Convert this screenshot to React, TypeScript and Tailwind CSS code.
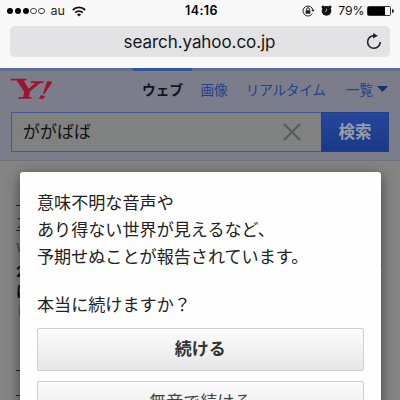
import { type ReactNode } from "react";

const messageLines = [
  "意味不明な音声や",
  "あり得ない世界が見えるなど、",
  "予期せぬことが報告されています。",
];

const signalDots = [true, true, true, false, false];

function StatusBar() {
  return (
    <div className="flex h-[22px] items-center justify-between pl-[7px] pr-[6px] text-[12px] leading-none">
      <div className="flex w-[140px] items-center">
        <div className="flex gap-[1.4px]">
          {signalDots.map((on, i) => (
            <span
              key={i}
              className={
                on
                  ? "h-[6.4px] w-[6.4px] rounded-full bg-black"
                  : "h-[6.4px] w-[6.4px] rounded-full border border-[#444]"
              }
            />
          ))}
        </div>
        <span className="ml-[6px] pt-px text-[12.5px] text-[#222]">au</span>
        <svg className="ml-[7px]" width="14" height="11" viewBox="0 0 14 11" fill="none" stroke="#111" strokeWidth="1.8">
          <path d="M.8 4a8.8 8.8 0 0 1 12.4 0" />
          <path d="M3.2 6.6a5.4 5.4 0 0 1 7.6 0" />
          <path d="M7 10.6 4.9 8.5a3 3 0 0 1 4.2 0z" fill="#111" stroke="none" />
        </svg>
      </div>

      <span className="pl-[2px] pt-px text-[12.5px] font-semibold tracking-[0.4px] text-black">14:16</span>

      <div className="flex w-[140px] items-center justify-end">
        {/* 画面の向きロック */}
        <svg width="13" height="12" viewBox="0 0 13 12" fill="none" stroke="#222">
          <path d="M10.3 8.6A5 5 0 1 1 10.9 5" />
          <path d="m9.1 4.7 1.9 2.1 1.7-2.1z" fill="#222" stroke="none" />
          <rect x="3.6" y="5.2" width="4.8" height="3.6" rx=".4" fill="#222" stroke="none" />
          <path d="M4.6 5.2V4.1a1.4 1.4 0 0 1 2.8 0v1.1" />
        </svg>
        {/* アラーム */}
        <svg className="ml-[6px]" width="11" height="11" viewBox="0 0 11 11" fill="#111">
          <circle cx="5.5" cy="5.9" r="4.8" />
          <circle cx="2" cy="1.9" r="1.5" />
          <circle cx="9" cy="1.9" r="1.5" />
          <path d="M5.6 3.6V6l-1.8.8" fill="none" stroke="#bbb" strokeWidth=".8" />
        </svg>
        <span className="ml-[6px] pt-px text-[12.2px] text-[#111]">79%</span>
        <div className="ml-[3px] flex items-center">
          <div className="flex h-[10px] w-[24px] rounded-[1.5px] border border-[#333]">
            <div className="h-full w-[17px] bg-black" />
          </div>
          <div className="ml-px h-[4px] w-[1.5px] rounded-r bg-[#333]" />
        </div>
      </div>
    </div>
  );
}

function AddressBar() {
  return (
    <div className="mx-[10px] mt-[4px] flex h-[31px] items-center rounded-[5px] bg-[#e3e3e5] pr-[8px]">
      <span className="ml-[23px] flex-1 pt-px text-center text-[17px] leading-none tracking-[-0.07px] text-[#161616]">
        search.yahoo.co.jp
      </span>
      <svg width="16" height="17" viewBox="0 0 16 17" fill="none" stroke="#222" strokeWidth="1.6">
        <path d="M14.2 9a6.3 6.3 0 1 1-6.5-6.3h1" />
        <path d="M7.1 0v5.6l4.8-2.8z" fill="#222" stroke="none" />
      </svg>
    </div>
  );
}

function SearchHeader() {
  return (
    <header className="h-[93px] border-b border-[#70727e] bg-[#7b7e8a]">
      <div className="flex h-[3px] bg-[#5e6d90] pl-[133px]">
        <div className="w-[59px] bg-[#3154a4]" />
      </div>
      <div className="flex h-[41px] pl-[10px] text-[13.7px] leading-[38px] text-[#25408b]">
        <svg className="mt-[7px]" width="43" height="24" viewBox="0 0 43 24" fill="#a31331">
          <path d="M.8.800h15.700v1.700h-2.800l4.800 8.300 6.800-5.900h-4.500V3.200h12.500v1.700h-3.100L20 13.500l-1 5.600h2.500v1.700H8.500v-1.700h4.700l1-5.100L6.700 2.500H.8z" />
          <path d="m37.300 3 5.200.8-7.800 11.900-1.800-.3zM30.700 17.200l4.500.5-1.800 3.400-4.500-.3z" />
        </svg>
        <span className="ml-[89px] font-bold tracking-[0.1px] text-[#10131b]">ウェブ</span>
        <span className="ml-[17px]">画像</span>
        <span className="ml-[18px] tracking-[-0.3px]">リアルタイム</span>
        <span className="ml-[20px]">一覧</span>
        <svg className="ml-[4px] mt-[15px]" width="11" height="6" viewBox="0 0 11 6" fill="#17316f">
          <path d="M0 0h11L5.5 6z" />
        </svg>
      </div>
      <div className="mx-[11px] flex h-[40px]">
        <div className="flex flex-1 items-center justify-between border border-r-0 border-[#435793] bg-[#808281] pl-[11px] pr-[20px]">
          <span className="text-[17px] leading-none text-[#111]">ががばば</span>
          <svg width="18" height="18" viewBox="0 0 18 18" stroke="#5b5c5d" strokeWidth="2.2">
            <path d="m1 1 16 16M17 1 1 17" />
          </svg>
        </div>
        <div className="flex w-[68px] items-center justify-center border border-[#243e83] bg-linear-to-b from-[#25479d] to-[#193987] text-[16.5px] font-bold text-[#979da9]">
          検索
        </div>
      </div>
    </header>
  );
}

// ダイアログの後ろからはみ出す検索結果
function Results() {
  return (
    <div className="flex h-[239px] justify-between bg-[#858585] pl-[16px] pr-[16.5px] text-[15px] leading-[20px] text-[#111]">
      <div className="w-[15px] pt-[44px]">
        <div className="h-px bg-[#20263a]" />
        <p className="mt-[6px] h-[19px] border-b border-[#20263a] text-[#222c4c]">ガ</p>
        <p className="mt-[6px] text-[#146322]">w</p>
        <p className="mt-[5px] font-bold">2</p>
        <p className="font-bold">は</p>
        <p>し</p>
        <div className="mt-[48px] h-px bg-[#20263a]" />
        <div className="mt-[24px] h-px bg-[#20263a]" />
      </div>
      <p className="pt-[99px]">さ</p>
    </div>
  );
}

function DialogButton({ children, className }: { children: ReactNode; className: string }) {
  return (
    <button
      className={`block h-[43px] w-full rounded-[2px] border border-[#cfcfcf] bg-linear-to-b from-[#fcfcfc] to-[#e7e7e7] text-[17px] leading-[41px] ${className}`}
    >
      {children}
    </button>
  );
}

export default function App() {
  return (
    <div className="relative h-[400px] w-[400px] overflow-hidden bg-[#f8f8f8] font-['Inter','Noto_Sans_CJK_JP',sans-serif]">
      <div className="h-[68px]">
        <StatusBar />
        <AddressBar />
      </div>
      <SearchHeader />
      <Results />

      {/* 確認ダイアログ */}
      <div className="absolute left-[19.5px] top-[172px] h-[260px] w-[361.5px] rounded-[3px] bg-[#fefefe] px-[17.5px] pt-[17px] shadow-[0_3px_14px_rgba(0,0,0,0.5)]">
        <div className="text-[17.1px] leading-[27px] text-[#222]">
          {messageLines.map((line) => (
            <p key={line}>{line}</p>
          ))}
          <p className="mt-[21px]">本当に続けますか？</p>
        </div>
        <div className="mt-[10px] flex flex-col gap-[10px]">
          <DialogButton className="font-bold text-[#333]">続ける</DialogButton>
          <DialogButton className="text-[#444]">無音で続ける</DialogButton>
        </div>
      </div>
    </div>
  );
}
